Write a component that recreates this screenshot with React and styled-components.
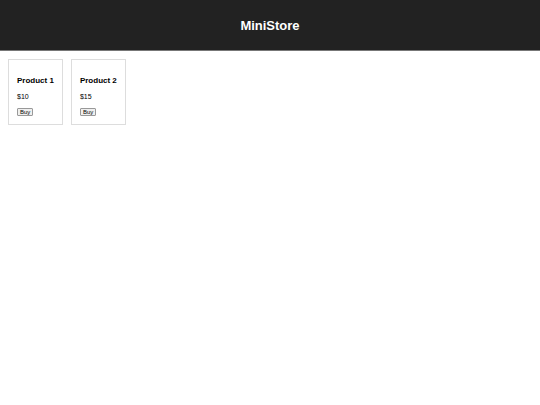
import React from "react";
import styled, { createGlobalStyle } from "styled-components";

const Global = createGlobalStyle`
  html, body { margin: 0; padding: 0; background: #fff; }
  body { font-family: "Liberation Sans", Arial, sans-serif; }
`;

const Header = styled.header`
  height: 50px;
  background: #222;
  border-bottom: 1px solid #777;
  display: flex;
  align-items: center;
  justify-content: center;
`;

const Title = styled.h1`
  margin: 0;
  color: #fff;
  font-size: 13px;
  font-weight: bold;
`;

const Grid = styled.main`
  display: flex;
  align-items: flex-start;
  gap: 8px;
  padding: 8px;
`;

const Card = styled.div`
  border: 1px solid #ddd;
  padding: 8px;
  display: flex;
  flex-direction: column;
  align-items: flex-start;
`;

const Name = styled.h3`
  margin: 8px 0 0;
  font-size: 8px;
  line-height: 10px;
  font-weight: bold;
  color: #000;
`;

const Price = styled.p`
  margin: 7px 0 0;
  font-size: 7px;
  line-height: 8px;
  color: #000;
`;

const BuyButton = styled.button`
  margin-top: 7px;
  font-family: "Liberation Sans", Arial, sans-serif;
  font-size: 6px;
  line-height: 6px;
  padding: 0 2px;
  background: #efefef;
  border: 1px solid #999;
  border-radius: 1px;
  color: #000;
`;

const products = [
  { name: "Product 1", price: "$10" },
  { name: "Product 2", price: "$15" },
];

export default function App() {
  return (
    <>
      <Global />
      <Header>
        <Title>MiniStore</Title>
      </Header>
      <Grid>
        {products.map((p) => (
          <Card key={p.name}>
            <Name>{p.name}</Name>
            <Price>{p.price}</Price>
            <BuyButton>Buy</BuyButton>
          </Card>
        ))}
      </Grid>
    </>
  );
}
